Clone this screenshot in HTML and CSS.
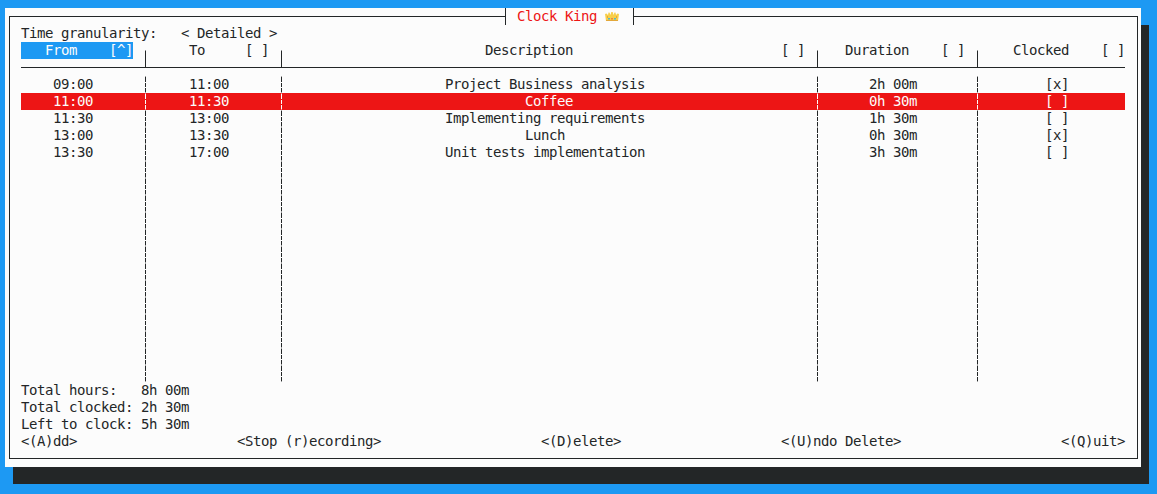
FILE: index.html
```html
<!DOCTYPE html>
<html lang="en">
<head>
<meta charset="utf-8">
<title>Clock King</title>
<link rel="stylesheet" href="styles.css">
</head>
<body>
<main class="window">
  <section class="frame">
    <h1 class="title">Clock King <svg class="crown" viewBox="0 0 14 9"><path fill="#f8cf4a" d="M1 9 0 2 1.5 1.5 3 3 3.5.5 4.5.5 5.5 3 6.3 0H7.7L8.5 3 9.5.5H10.5L11 3 12.5 1.5 14 2 13 9Z"/><path fill="#e3a83a" d="M1 8h12v1H1zM2 4h1v2H2zM11 4h1v2h-1z"/><path fill="#55b9c8" d="M3 6h2v1.5H3zM9 6h2v1.5H9z"/><path fill="#e8743c" d="M6.2 6h1.6v1.5H6.2z"/></svg></h1>
    <div class="line">Time granularity:   &lt; Detailed &gt;</div>
    <div class="table">
      <div class="row head">
        <div class="cell from"><span class="sorted">   From    [^]</span></div>
        <div class="cell to">To     [ ]</div>
        <div class="cell desc"><span>Description</span><span>[ ]</span></div>
        <div class="cell dur">Duration    [ ]</div>
        <div class="cell clk">Clocked    [ ]</div>
      </div>
      <div class="body">
        <div class="row"><div class="cell from">09:00</div><div class="cell to">11:00</div><div class="cell desc">Project Business analysis</div><div class="cell dur">2h 00m</div><div class="cell clk">[x]</div></div>
        <div class="row selected"><div class="cell from">11:00</div><div class="cell to">11:30</div><div class="cell desc"> Coffee</div><div class="cell dur">0h 30m</div><div class="cell clk">[ ]</div></div>
        <div class="row"><div class="cell from">11:30</div><div class="cell to">13:00</div><div class="cell desc">Implementing requirements</div><div class="cell dur">1h 30m</div><div class="cell clk">[ ]</div></div>
        <div class="row"><div class="cell from">13:00</div><div class="cell to">13:30</div><div class="cell desc">Lunch</div><div class="cell dur">0h 30m</div><div class="cell clk">[x]</div></div>
        <div class="row"><div class="cell from">13:30</div><div class="cell to">17:00</div><div class="cell desc">Unit tests implementation</div><div class="cell dur">3h 30m</div><div class="cell clk">[ ]</div></div>
        <div class="row filler"><div class="cell from"></div><div class="cell to"></div><div class="cell desc"></div><div class="cell dur"></div><div class="cell clk"></div></div>
      </div>
    </div>
    <div class="line">Total hours:   8h 00m</div>
    <div class="line">Total clocked: 2h 30m</div>
    <div class="line">Left to clock: 5h 30m</div>
    <nav class="actions"><span>&lt;(A)dd&gt;</span><span>&lt;Stop (r)ecording&gt;</span><span>&lt;(D)elete&gt;</span><span>&lt;(U)ndo Delete&gt;</span><span>&lt;(Q)uit&gt;</span></nav>
  </section>
</main>
</body>
</html>
```
FILE: styles.css
```css
* { box-sizing: border-box; }

body {
  --ink: #232627;
  --blue: #1d99f3;
  --paper: #fcfcfc;
  margin: 0;
  height: 494px;
  overflow: hidden;
  padding: 8px 0 0 5px;
  background: var(--blue);
  color: var(--ink);
  font: 14px/17px "DejaVu Sans Mono", monospace;
  letter-spacing: -0.4287px;
}

.window {
  display: flex;
  width: 1136px;
  height: 459px;
  padding: 8px 3px 8px 4px;
  background: var(--paper);
  box-shadow: 8px 17px 0 var(--ink);
}

.frame {
  position: relative;
  display: flex;
  flex-direction: column;
  width: 1129px;
  border: 1px solid var(--ink);
  padding: 8px 12px 0 11px;
}

/* Title sits over the top border of the frame */
.title {
  position: absolute;
  top: -9px;
  left: 495px;
  width: 129px;
  height: 17px;
  margin: 0;
  padding-left: 11px;
  display: flex;
  border: solid var(--ink);
  border-width: 0 1px;
  background: var(--paper);
  color: #ed1515;
  font: inherit;
  white-space: pre;
}

.crown {
  width: 14px;
  height: 9px;
  margin: 4px 0 0;
}

.line, .cell, .actions span { height: 17px; white-space: pre; }

.row {
  display: grid;
  grid-template-columns: 124px 136px 536px 160px 148px;
  height: 17px;
}

.head {
  height: 26px;
  border-bottom: 1px solid var(--ink);
}

.head .cell { height: 25px; }

.head .cell + .cell {
  background: linear-gradient(#8f9191 0 1px, var(--ink) 1px) 0 8px / 1px 17px no-repeat;
}

.sorted {
  display: block;
  width: 112px;
  height: 17px;
  background: var(--blue);
  color: var(--paper);
}

.body {
  padding-top: 8px;
}

.body .cell + .cell {
  --dash: var(--ink);
  --soft: #a0a1a1;
  background: linear-gradient(var(--soft) 0 1px, var(--dash) 1px 6px, transparent 6px 7px, var(--dash) 7px 11px, transparent 11px 12px, var(--dash) 12px 16px, var(--soft) 16px) 0 0 / 1px 17px repeat-y;
}

.body .selected { background: #ed1515; color: var(--paper); }
.body .selected .cell + .cell { --dash: var(--paper); --soft: #f48080; }

.body .filler { height: 221px; }
.body .filler .cell { height: 221px; }

.body .from { padding-left: 32px; }
.to { padding-left: 44px; }
.body .desc { padding: 0 20px 0 12px; text-align: center; }
.head .desc { display: flex; justify-content: space-between; padding: 0 12px 0 204px; }
.head .dur { padding-left: 28px; }
.body .dur { padding-left: 52px; }
.head .clk { padding-left: 36px; }
.body .clk { padding-left: 68px; }

.actions {
  display: flex;
  justify-content: space-between;
}
```
